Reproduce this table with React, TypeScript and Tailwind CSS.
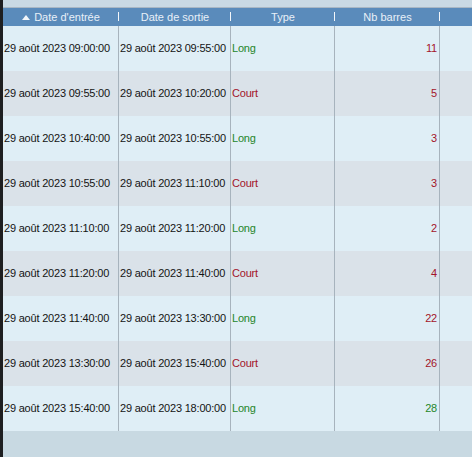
import React from "react";

type Trade = {
  entry: string;
  exit: string;
  type: "Long" | "Court";
  bars: number;
  win: boolean;
};

const trades: Trade[] = [
  { entry: "29 août 2023 09:00:00", exit: "29 août 2023 09:55:00", type: "Long", bars: 11, win: false },
  { entry: "29 août 2023 09:55:00", exit: "29 août 2023 10:20:00", type: "Court", bars: 5, win: false },
  { entry: "29 août 2023 10:40:00", exit: "29 août 2023 10:55:00", type: "Long", bars: 3, win: false },
  { entry: "29 août 2023 10:55:00", exit: "29 août 2023 11:10:00", type: "Court", bars: 3, win: false },
  { entry: "29 août 2023 11:10:00", exit: "29 août 2023 11:20:00", type: "Long", bars: 2, win: false },
  { entry: "29 août 2023 11:20:00", exit: "29 août 2023 11:40:00", type: "Court", bars: 4, win: false },
  { entry: "29 août 2023 11:40:00", exit: "29 août 2023 13:30:00", type: "Long", bars: 22, win: false },
  { entry: "29 août 2023 13:30:00", exit: "29 août 2023 15:40:00", type: "Court", bars: 26, win: false },
  { entry: "29 août 2023 15:40:00", exit: "29 août 2023 18:00:00", type: "Long", bars: 28, win: true },
];

const cols = "grid grid-cols-[116px_112px_104px_105px_1fr]";

function HeaderCell({ children }: { children?: React.ReactNode }) {
  return (
    <div className="relative flex items-center justify-center">
      {children}
      <span className="absolute right-0 top-[4px] h-[9px] w-px bg-[#f2f6fa]" />
    </div>
  );
}

export default function App() {
  return (
    <div
      className="flex w-[472px] h-[457px] overflow-hidden text-[11px] tracking-[-0.2px]"
      style={{ fontFamily: '"Liberation Sans", Arial, sans-serif' }}
    >
      <div className="w-[3px] shrink-0 bg-[#1e1f21]" />
      <div className="flex flex-1 flex-col">
        <div className="h-[7px] bg-[#c9d9e4]" />
        <div className="h-px bg-[#a9b7c4]" />
        <div className={`${cols} h-[18px] bg-[#5a8bbb] text-[#e8f0f8] tracking-normal`}>
          <HeaderCell>
            <svg width="8" height="5" viewBox="0 0 8 5" className="mr-[4px]">
              <path d="M4 0 L8 5 L0 5 Z" fill="#f2f6fa" />
            </svg>
            Date d'entrée
          </HeaderCell>
          <HeaderCell>Date de sortie</HeaderCell>
          <HeaderCell>Type</HeaderCell>
          <HeaderCell>Nb barres</HeaderCell>
          <div />
        </div>
        {trades.map((t, i) => (
          <div
            key={i}
            className={`${cols} h-[45px] ${i % 2 === 0 ? "bg-[#dfeef6]" : "bg-[#dae2e9]"} text-[#141414]`}
          >
            <div className="flex items-center border-r border-[#a7b3bd] pl-px whitespace-nowrap">{t.entry}</div>
            <div className="flex items-center border-r border-[#a7b3bd] pl-px whitespace-nowrap">{t.exit}</div>
            <div
              className={`flex items-center border-r border-[#a7b3bd] pl-px ${
                t.type === "Long" ? "text-[#25862a]" : "text-[#a3142a]"
              }`}
            >
              {t.type}
            </div>
            <div
              className={`flex items-center justify-end border-r border-[#a7b3bd] pr-[2px] ${
                t.win ? "text-[#25862a]" : "text-[#a3142a]"
              }`}
            >
              {t.bars}
            </div>
            <div />
          </div>
        ))}
        <div className="flex-1 bg-[#c8d9e2]" />
      </div>
    </div>
  );
}
